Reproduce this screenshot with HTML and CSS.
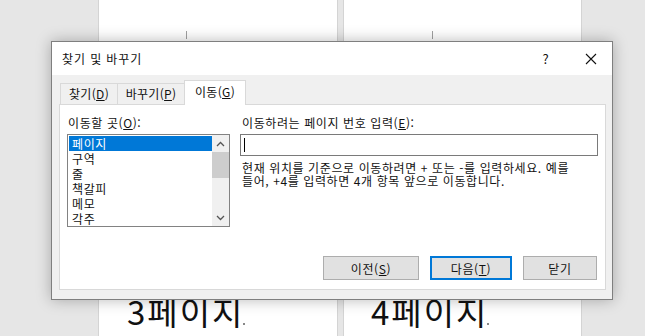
FILE: index.html
```html
<!DOCTYPE html>
<html lang="ko">
<head>
    <meta charset="UTF-8">
    <title>찾기 및 바꾸기</title>
    <link rel="stylesheet" href="styles.css">
</head>
<body>
    <!-- Document pages behind the dialog -->
    <div class="workspace">
        <div class="page page-left">
            <span class="corner-mark"></span>
            <p class="page-label">3페이지<span class="para-mark"></span></p>
        </div>
        <div class="page page-right">
            <span class="corner-mark"></span>
            <p class="page-label">4페이지<span class="para-mark"></span></p>
        </div>
    </div>

    <!-- Find and replace dialog -->
    <div class="dialog">
        <div class="titlebar">
            <span class="title">찾기 및 바꾸기</span>
            <div class="title-buttons">
                <span class="help">?</span>
                <svg class="close" width="12" height="12" viewBox="0 0 12 12">
                    <path d="M1 1 L11 11 M11 1 L1 11" stroke="#111" stroke-width="1.1" fill="none"/>
                </svg>
            </div>
        </div>
        <div class="dialog-body">
            <div class="tabs">
                <div class="tab tab-find">찾기(<u>D</u>)</div>
                <div class="tab tab-replace">바꾸기(<u>P</u>)</div>
                <div class="tab tab-goto active">이동(<u>G</u>)</div>
            </div>
            <div class="panel">
                <div class="form-grid">
                    <div class="col-left">
                        <label class="field-label">이동할 곳(<u>O</u>):</label>
                        <div class="listbox">
                            <ul class="list-items">
                                <li class="selected">페이지</li>
                                <li>구역</li>
                                <li>줄</li>
                                <li>책갈피</li>
                                <li>메모</li>
                                <li>각주</li>
                            </ul>
                            <div class="scrollbar">
                                <div class="scroll-arrow">
                                    <svg width="9" height="6" viewBox="0 0 9 6"><path d="M1 5 L4.5 1.5 L8 5" stroke="#555" stroke-width="1.3" fill="none"/></svg>
                                </div>
                                <div class="scroll-thumb"></div>
                                <div class="scroll-track"></div>
                                <div class="scroll-arrow">
                                    <svg width="9" height="6" viewBox="0 0 9 6"><path d="M1 1 L4.5 4.5 L8 1" stroke="#555" stroke-width="1.3" fill="none"/></svg>
                                </div>
                            </div>
                        </div>
                    </div>
                    <div class="col-right">
                        <label class="field-label">이동하려는 페이지 번호 입력(<u>E</u>):</label>
                        <div class="text-input"><span class="caret"></span></div>
                        <p class="hint">현재 위치를 기준으로 이동하려면 + 또는 -를 입력하세요. 예를<br>들어, +4를 입력하면 4개 항목 앞으로 이동합니다.</p>
                    </div>
                </div>
                <div class="button-row">
                    <button class="btn btn-prev">이전(<u>S</u>)</button>
                    <button class="btn btn-next focused">다음(<u>T</u>)</button>
                    <button class="btn btn-close">닫기</button>
                </div>
            </div>
        </div>
    </div>
</body>
</html>
```

FILE: styles.css
```css
html, body {
    margin: 0;
    padding: 0;
    width: 645px;
    height: 336px;
    overflow: hidden;
    background-color: #e6e6e6;
    font-family: "Noto Sans CJK KR", "Noto Sans", sans-serif;
}
u {
    text-decoration: underline;
    text-underline-offset: 1px;
}

/* document pages */
.workspace {
    display: flex;
    gap: 7px;
    padding-left: 99px;
    height: 336px;
}
.page {
    position: relative;
    background: #fff;
    box-shadow: 0 0 0 1px #d4d4d4;
    height: 336px;
}
.page-left {
    width: 238px;
}
.page-right {
    width: 237px;
}
.corner-mark {
    position: absolute;
    top: 31px;
    left: 87px;
    width: 1px;
    height: 8px;
    background: #a0a0a0;
}
.page-right .corner-mark {
    left: 88px;
}
.page-label {
    margin: 0;
    padding-top: 293px;
    padding-left: 28px;
    font-size: 33px;
    line-height: 36px;
    letter-spacing: 2px;
    color: #111;
}
.page-right .page-label {
    padding-left: 27px;
}
.para-mark {
    display: inline-block;
    width: 2px;
    height: 2px;
    margin-left: -1px;
    background: #888;
}

/* dialog */
.dialog {
    position: absolute;
    left: 51px;
    top: 41px;
    width: 560px;
    height: 257px;
    border: 1px solid #7f7f7f;
    background: #f0f0f0;
    box-shadow: 0 0 14px rgba(0, 0, 0, 0.28);
    letter-spacing: 0.6px;
}
.titlebar {
    display: flex;
    align-items: center;
    justify-content: space-between;
    height: 33px;
    padding-left: 10px;
    background: #fff;
    font-size: 12px;
    color: #111;
}
.title {
    letter-spacing: 0.9px;
}
.title-buttons {
    display: flex;
    align-items: center;
}
.help {
    font-size: 13px;
    width: 12px;
    text-align: center;
}
.close {
    margin-left: 33px;
    margin-right: 15px;
}
.dialog-body {
    padding: 5px 6px 0 7px;
}
.tabs {
    display: flex;
    align-items: flex-end;
    height: 24px;
    padding-left: 1px;
}
.tab {
    box-sizing: border-box;
    height: 21px;
    border: 1px solid #d9d9d9;
    border-bottom: none;
    margin-left: -1px;
    background: #f0f0f0;
    font-size: 12px;
    line-height: 19px;
    text-align: center;
    letter-spacing: 0.3px;
    color: #111;
}
.tab-find {
    width: 58px;
    margin-left: 0;
}
.tab-replace {
    width: 68px;
}
.tab-goto {
    width: 62px;
}
.tab.active {
    height: 25px;
    margin-bottom: -1px;
    background: #fff;
    line-height: 21px;
    position: relative;
}
.panel {
    box-sizing: border-box;
    height: 186px;
    border: 1px solid #d9d9d9;
    background: #fff;
    padding: 10px 7px 9px 7px;
    display: flex;
    flex-direction: column;
    justify-content: space-between;
}
.form-grid {
    display: grid;
    grid-template-columns: 163px 358px;
    column-gap: 10px;
}
.field-label {
    display: block;
    font-size: 12px;
    line-height: 15px;
    height: 15px;
    margin-bottom: 4px;
    padding-left: 1px;
    color: #111;
}
.col-right .field-label {
    padding-left: 2px;
}

/* listbox */
.listbox {
    box-sizing: border-box;
    height: 93px;
    border: 1px solid #828282;
    display: flex;
    padding: 1px 0 0 1px;
}
.list-items {
    list-style: none;
    margin: 0;
    padding: 0;
    width: 143px;
}
.list-items li {
    height: 15px;
    line-height: 15px;
    padding-left: 3px;
    font-size: 12px;
    color: #111;
}
.list-items li.selected {
    background: #0078d7;
    color: #fff;
}
.scrollbar {
    width: 17px;
    margin-top: -1px;
    background: #f0f0f0;
    display: flex;
    flex-direction: column;
}
.scroll-arrow {
    height: 17px;
    display: flex;
    align-items: center;
    justify-content: center;
}
.scroll-thumb {
    height: 26px;
    background: #cdcdcd;
}
.scroll-track {
    flex-grow: 1;
}

/* text input */
.text-input {
    box-sizing: border-box;
    position: relative;
    height: 22px;
    border: 1px solid #7a7a7a;
    background: #fff;
}
.caret {
    position: absolute;
    left: 3px;
    top: 3px;
    width: 1px;
    height: 14px;
    background: #000;
}
.hint {
    margin: 5px 0 0 0;
    padding-left: 2px;
    font-size: 12px;
    line-height: 13px;
    color: #111;
}

/* buttons */
.button-row {
    display: flex;
    justify-content: flex-end;
    gap: 11px;
    padding-right: 1px;
}
.btn {
    box-sizing: border-box;
    height: 24px;
    padding: 0;
    border: 1px solid #adadad;
    background: #e1e1e1;
    font-family: "Noto Sans CJK KR", "Noto Sans", sans-serif;
    font-size: 12px;
    letter-spacing: 0.6px;
    color: #111;
}
.btn-prev {
    width: 96px;
}
.btn-next {
    width: 82px;
}
.btn-close {
    width: 74px;
}
.btn.focused {
    border: 2px solid #0078d7;
}
```
